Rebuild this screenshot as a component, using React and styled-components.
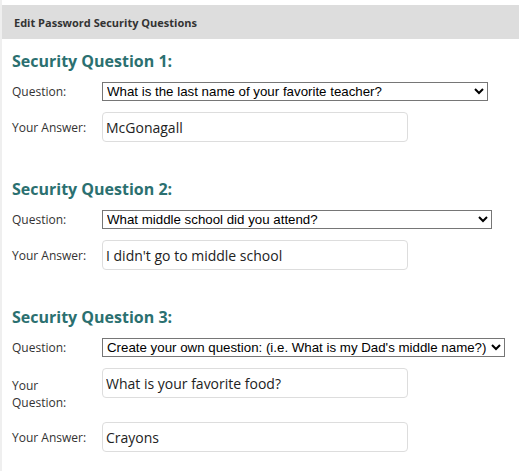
import React from 'react';
import styled, { createGlobalStyle } from 'styled-components';

const GlobalStyle = createGlobalStyle`
    body {
        margin: 0;
        background: #ffffff;
        font-family: "Open Sans", "Liberation Sans", sans-serif;
        color: #333333;
    }
`

const Panel = styled.div`
    min-height: 471px;
    box-sizing: border-box;
    padding-top: 5px;
    border-left: 2px solid #efefef;
    background: #ffffff;
`

const Header = styled.div`
    height: 34px;
    display: flex;
    align-items: center;
    padding-left: 12px;
    background: #dddddd;
    font-size: 11px;
    font-weight: 700;
    color: #333333;
`

const Body = styled.div`
    padding: 11px 10px 0 10px;
`

const Section = styled.div`
    margin-bottom: 36px;
`

const Title = styled.h2`
    margin: 0 0 10px 0;
    font-size: 16px;
    font-weight: 700;
    color: #2b7070;
    line-height: 22px;
`

const Row = styled.div`
    display: grid;
    grid-template-columns: 90px auto;
    align-items: ${props => props.top ? 'start' : 'center'};
    margin-bottom: ${props => props.gap || 11}px;
`

const Label = styled.label`
    font-size: 12px;
    line-height: 17px;
    color: #333333;
    padding-top: ${props => props.top ? 9 : 0}px;
`

const Select = styled.select`
    width: ${props => props.w}px;
    height: 19px;
    box-sizing: border-box;
    border: 1px solid #767676;
    border-radius: 0;
    padding: 0;
    background: #ffffff;
    font-family: "Liberation Sans", Arial, sans-serif;
    font-size: 13.3px;
    color: #000000;
`

const Input = styled.input`
    width: 306px;
    height: 30px;
    box-sizing: border-box;
    border: 1px solid #dddddd;
    border-radius: 4px;
    padding: 0 3px;
    font-family: "Open Sans", "Liberation Sans", sans-serif;
    font-size: 14px;
    color: #222222;
    outline: none;
`

const questions = [
    { q: 'What is the last name of your favorite teacher?', w: 386, a: 'McGonagall' },
    { q: 'What middle school did you attend?', w: 390, a: "I didn't go to middle school" },
    { q: "Create your own question: (i.e. What is my Dad's middle name?)", w: 403, a: 'Crayons', own: 'What is your favorite food?' },
]

export default function App() {
    return (
        <>
            <GlobalStyle />
            <Panel>
                <Header>Edit Password Security Questions</Header>
                <Body>
                    {questions.map((item, i) => (
                        <Section key={i}>
                            <Title>Security Question {i + 1}:</Title>
                            <Row>
                                <Label>Question:</Label>
                                <Select w={item.w} defaultValue={item.q}>
                                    <option>{item.q}</option>
                                </Select>
                            </Row>
                            {item.own && (
                                <Row top gap={11}>
                                    <Label top>Your<br />Question:</Label>
                                    <Input defaultValue={item.own} />
                                </Row>
                            )}
                            <Row>
                                <Label>Your Answer:</Label>
                                <Input defaultValue={item.a} />
                            </Row>
                        </Section>
                    ))}
                </Body>
            </Panel>
        </>
    );
}
